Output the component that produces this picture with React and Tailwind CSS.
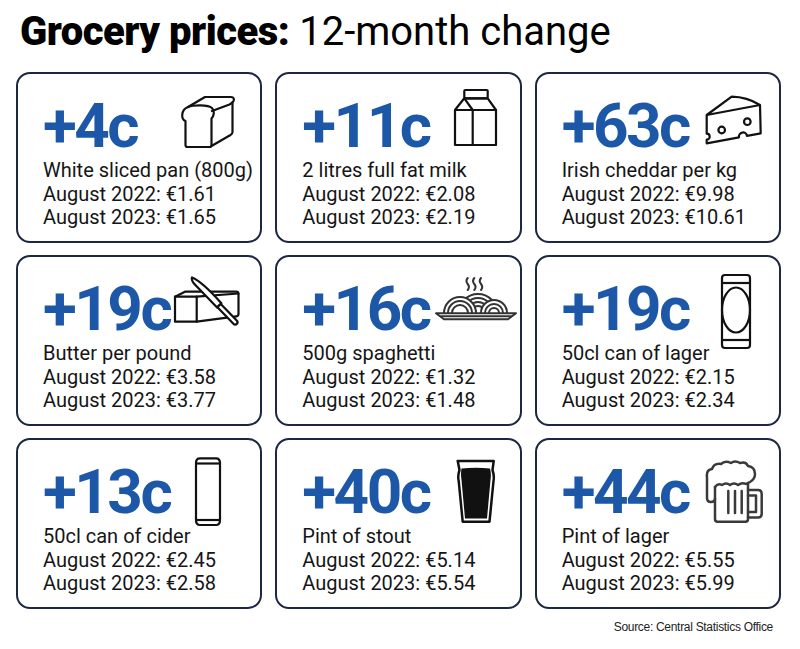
import React from "react";

const BLUE = "text-[#1d57a8]";

function Bread() {
  return (
    <svg width="60" height="56" viewBox="0 0 60 56" fill="none" stroke="#111" strokeWidth="2.2" strokeLinejoin="round" strokeLinecap="round">
      <path d="M7.5 27 C3 25.5 2.5 16 10 13 C15 11 30 10.5 34 14 C37 17 36 22 33.5 24.5 L33.5 51 Q33.5 53 31.5 53 L9.5 53 Q7.5 53 7.5 51 Z" />
      <path d="M10 13 L27 3 L53 3 Q57 3.5 55.5 7 Q54.5 9 51.5 10.5 L34 17" />
      <path d="M54.5 8.5 L54.5 38 Q54.5 40 52.5 41 L33.5 52" />
    </svg>
  );
}

function Milk() {
  return (
    <svg width="50" height="60" viewBox="0 0 50 60" fill="none" stroke="#111" strokeWidth="2.2" strokeLinejoin="round">
      <rect x="13.3" y="2" width="23.4" height="8.3" rx="1" />
      <path d="M13.3 10.3 L4 22 L45 22 L36.7 10.3 Z" />
      <path d="M13.3 10.3 L21.7 22" />
      <rect x="4" y="22" width="41" height="35" />
      <path d="M21.7 22 L21.7 57" />
    </svg>
  );
}

function Cheese() {
  return (
    <svg width="66" height="56" viewBox="0 0 66 56" fill="none" stroke="#111" strokeWidth="2.2" strokeLinejoin="round">
      <path d="M6.7 23 L31.7 4.7 Q47 5 60 13 L60.7 41.3 L47 43.8 A4 4 0 0 0 39 45.3 L6.7 51.3 L6.7 47.7 A3 3 0 0 0 6.7 41.7 Z" />
      <path d="M6.7 23 L60 13" />
      <circle cx="21.7" cy="38" r="3.3" />
      <circle cx="47.3" cy="29.7" r="3.3" />
    </svg>
  );
}

function Butter() {
  return (
    <svg width="75" height="56" viewBox="0 0 75 56" fill="none" stroke="#111" strokeWidth="2.2" strokeLinejoin="round" strokeLinecap="round">
      <path d="M5 21.7 L15 16.7 L66 16.7 Q68.5 16.7 68.5 19 L68.5 39 Q68.5 41 66.5 41.3 L26.7 46.7" />
      <rect x="5" y="21.7" width="21.7" height="25" />
      <path d="M26.7 21.7 L68.5 18.5" />
      <g transform="translate(22 2.5) rotate(46)">
        <path d="M0 0 Q10 -4.5 39 -3.2 L39 2.8 L6 2.8 Q1 2.3 0 0 Z" fill="#fff" />
        <path d="M39 -2.3 L62 -2.3 Q64.5 -2.3 64.5 0 Q64.5 2.3 62 2.3 L39 2.3 Z" fill="#fff" />
      </g>
    </svg>
  );
}

function Spaghetti() {
  const arcs = (cx, rs) =>
    rs.map((r, i) => (
      <path key={r} d={`M${cx - r} 38 A${r} ${r} 0 0 1 ${cx + r} 38`} fill={i === 0 ? "#fff" : "none"} />
    ));
  return (
    <svg width="86" height="50" viewBox="0 0 86 50" fill="none" stroke="#333" strokeWidth="2" strokeLinecap="round" strokeLinejoin="round">
      <path d="M34.7 3 q-2.5 3 0 6 q2.5 3 0 6" />
      <path d="M41.3 3 q-2.5 3 0 6 q2.5 3 0 6" />
      <path d="M48 3 q-2.5 3 0 6 q2.5 3 0 6" />
      {arcs(45, [19, 15, 11, 7])}
      {arcs(27, [16, 12, 8])}
      {arcs(61, [13, 9, 5])}
      <path d="M3 38.3 L83 38.3 L75 44.3 L11 44.3 Z" fill="#fff" />
      <path d="M8 41.2 L78 41.2" />
    </svg>
  );
}

function LagerCan() {
  return (
    <svg width="34" height="80" viewBox="0 0 34 80" fill="none" stroke="#111" strokeWidth="2.2" strokeLinejoin="round">
      <rect x="3" y="3" width="28" height="73" rx="3" />
      <path d="M3 11 L31 11" />
      <path d="M3 68 L31 68" />
      <ellipse cx="17" cy="38" rx="14" ry="22.5" />
    </svg>
  );
}

function CiderCan() {
  return (
    <svg width="32" height="74" viewBox="0 0 32 74" fill="none" stroke="#111" strokeWidth="2.2" strokeLinejoin="round">
      <path d="M4 8 Q4 3.3 8 3.3 L24 3.3 Q28 3.3 28 8 L28 65 Q28 70 24 70 L8 70 Q4 70 4 65 Z" />
      <path d="M4 8.5 L28 8.5" />
      <path d="M4 65 L28 65" />
    </svg>
  );
}

function Stout() {
  return (
    <svg width="44" height="68" viewBox="0 0 44 68" fill="none" stroke="#111" strokeWidth="2.5" strokeLinejoin="round">
      <path d="M3.7 3 L39.7 3 L38.5 12 Q40.5 18 39.5 23 L35.5 63.7 L8.7 63.7 L4.7 23 Q3.5 18 5.5 12 Z" />
      <path d="M7.5 10.5 Q22 9 36 10.5 Q37.5 16 36.5 22 L33 60.5 L11 60.5 L7.5 22 Q6.5 16 7.5 10.5 Z" fill="#111" stroke="none" />
    </svg>
  );
}

function Mug() {
  return (
    <svg width="64" height="68" viewBox="0 0 64 68" fill="none" stroke="#3a3a3a" strokeWidth="2.5" strokeLinejoin="round" strokeLinecap="round">
      <path d="M13 40 Q12.5 43 9 43 Q5 43 5 39 L5 18 Q4 11 10 10 Q12 4 19 5 Q23 1 29 4 Q33 1 38 4 Q44 2 46 7 Q53 8 53 15 Q53 20 48 23 L46 24" />
      <path d="M13 28 Q16 24 20 26 Q24 23 28 26 Q32 23 36 26 Q40 23 44 25 L46 24" />
      <path d="M13 28 L13 60 Q13 62.7 15.5 62.7 L43.5 62.7 Q46 62.7 46 60 L46 24" />
      <path d="M46 31 L56 31 Q59.7 31 59.7 35 L59.7 55 Q59.7 58.5 56 58.5 L46 58.5" />
      <path d="M46 36.5 L54 36.5 L54 53 L46 53" />
      <path d="M26.3 32 L26.3 54 M33 32 L33 54 M39.7 32 L39.7 54" />
    </svg>
  );
}

const items = [
  { change: "+4c", label: "White sliced pan (800g)", y22: "€1.61", y23: "€1.65", Icon: Bread, pos: "ml-[8px] -mt-[1px]" },
  { change: "+11c", label: "2 litres full fat milk", y22: "€2.08", y23: "€2.19", Icon: Milk, pos: "ml-[21px] -mt-[7px]" },
  { change: "+63c", label: "Irish cheddar per kg", y22: "€9.98", y23: "€10.61", Icon: Cheese, pos: "ml-[11px] -mt-[3px]" },
  { change: "+19c", label: "Butter per pound", y22: "€3.58", y23: "€3.77", Icon: Butter, pos: "ml-0 -mt-[3px]" },
  { change: "+16c", label: "500g spaghetti", y22: "€1.32", y23: "€1.48", Icon: Spaghetti, pos: "ml-[3px] -mt-[3px]" },
  { change: "+19c", label: "50cl can of lager", y22: "€2.15", y23: "€2.34", Icon: LagerCan, pos: "ml-[30px] -mt-[6px]" },
  { change: "+13c", label: "50cl can of cider", y22: "€2.45", y23: "€2.58", Icon: CiderCan, pos: "ml-[22px] -mt-[6px]" },
  { change: "+40c", label: "Pint of stout", y22: "€5.14", y23: "€5.54", Icon: Stout, pos: "ml-[24px] -mt-[3px]" },
  { change: "+44c", label: "Pint of lager", y22: "€5.55", y23: "€5.99", Icon: Mug, pos: "ml-[13px] -mt-[2px]" },
];

function Card({ item }) {
  const Icon = item.Icon;
  return (
    <div className="flex h-[171px] flex-col rounded-[14px] border-2 border-[#1c2744] bg-white pl-[25px] pt-[21px]">
      <div className="flex h-[62px]">
        <span className={`text-[62px] font-bold leading-[62px] tracking-[-2.5px] ${BLUE}`}>{item.change}</span>
        <div className="ml-auto flex h-[62px] w-[90px] flex-none items-start">
          <div className={`flex-none ${item.pos}`}>
            <Icon />
          </div>
        </div>
      </div>
      <div className="mt-[2px] text-[20px] leading-[23.5px] text-[#151515]">
        <p>{item.label}</p>
        <p>August 2022: {item.y22}</p>
        <p>August 2023: {item.y23}</p>
      </div>
    </div>
  );
}

export default function App() {
  return (
    <div className="h-[649px] w-[800px] overflow-hidden bg-white font-['Roboto',sans-serif] text-[#111]">
      <h1 className="pl-[20px] pt-[12px] text-[40px] leading-[40px] text-black">
        <span className="font-black tracking-[-0.5px]">Grocery prices:</span>
        <span className="font-normal"> 12-month change</span>
      </h1>
      <div className="ml-[16px] mt-[20px] grid w-[765px] grid-cols-3 gap-x-[13px] gap-y-[12px]">
        {items.map((item) => (
          <Card key={item.label} item={item} />
        ))}
      </div>
      <p className="mt-[11px] pr-[27px] text-right font-['Liberation_Sans',sans-serif] text-[12px] leading-[14px] tracking-[-0.3px] text-[#222]">
        Source: Central Statistics Office
      </p>
    </div>
  );
}
